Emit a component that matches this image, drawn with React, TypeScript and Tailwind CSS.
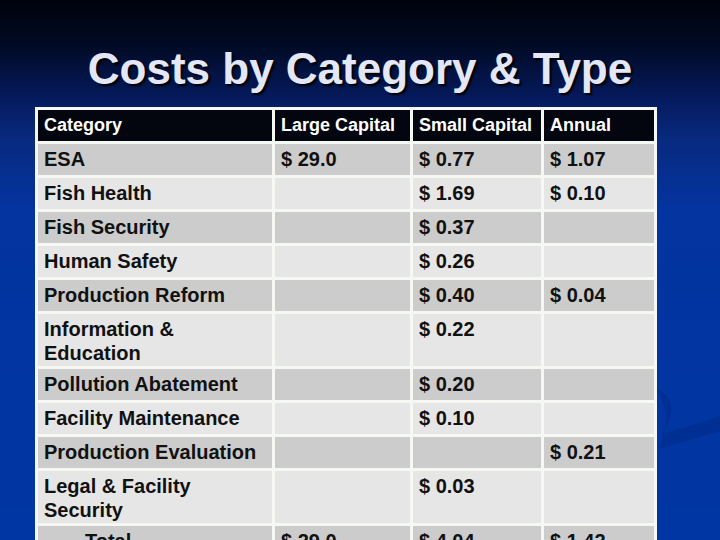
import React from 'react';

type Row = {
  category: string;
  large?: string;
  small?: string;
  annual?: string;
  indent?: boolean;
};

const rows: Row[] = [
  { category: 'ESA', large: '$ 29.0', small: '$ 0.77', annual: '$ 1.07' },
  { category: 'Fish Health', small: '$ 1.69', annual: '$ 0.10' },
  { category: 'Fish Security', small: '$ 0.37' },
  { category: 'Human Safety', small: '$ 0.26' },
  { category: 'Production Reform', small: '$ 0.40', annual: '$ 0.04' },
  { category: 'Information & Education', small: '$ 0.22' },
  { category: 'Pollution Abatement', small: '$ 0.20' },
  { category: 'Facility Maintenance', small: '$ 0.10' },
  { category: 'Production Evaluation', annual: '$ 0.21' },
  { category: 'Legal & Facility Security', small: '$ 0.03' },
  { category: 'Total', large: '$ 29.0', small: '$ 4.04', annual: '$ 1.42', indent: true },
];

const cell = 'border-[3px] border-[#f6f8f4] align-top px-[6px] pt-[3px] pb-[1px] leading-[24px]';

function Swoosh() {
  return (
    <svg
      className="absolute left-[650px] top-[380px] pointer-events-none"
      width="70"
      height="80"
      viewBox="0 0 70 80"
    >
      <path
        d="M5 8 C 22 15, 28 32, 12 54 C 35 48, 55 41, 70 36 L 70 51 C 50 57, 30 63, 8 69 C 20 46, 18 26, 5 8 Z"
        fill="#002a85"
        opacity="0.5"
      />
    </svg>
  );
}

export default function App() {
  return (
    <div
      className="relative h-[540px] w-[720px] overflow-hidden bg-[linear-gradient(to_bottom,#00030c_0px,#010a24_45px,#05195a_95px,#082a80_140px,#0334a0_210px,#0036a3_540px)]"
      style={{ fontFamily: '"Liberation Sans", Arial, sans-serif' }}
    >
      <Swoosh />
      <h1 className="relative pt-[47px] text-center text-[44px] font-bold leading-[44px] text-[#e4e7f7] [text-shadow:2px_2px_2px_#000]">
        Costs by Category &amp; Type
      </h1>
      <table className="relative ml-[35px] mt-[16px] w-[619px] table-fixed border-collapse text-left font-bold">
        <colgroup>
          <col className="w-[237px]" />
          <col className="w-[138px]" />
          <col className="w-[131px]" />
          <col className="w-[113px]" />
        </colgroup>
        <thead>
          <tr className="bg-[#03060f] text-[18px] text-white">
            <th className={cell}>
              <div className="min-h-[27px]">Category</div>
            </th>
            <th className={cell}>
              <div className="min-h-[27px]">Large Capital</div>
            </th>
            <th className={cell}>
              <div className="min-h-[27px]">Small Capital</div>
            </th>
            <th className={cell}>
              <div className="min-h-[27px]">Annual</div>
            </th>
          </tr>
        </thead>
        <tbody className="text-[20px] text-[#111]">
          {rows.map((row, i) => (
            <tr key={row.category} className={i % 2 === 0 ? 'bg-[#cbcccb]' : 'bg-[#e6e6e6]'}>
              <td className={`${cell} ${row.indent ? 'pl-[47px]' : ''}`}>
                <div className="min-h-[27px]">{row.category}</div>
              </td>
              <td className={cell}>{row.large}</td>
              <td className={cell}>{row.small}</td>
              <td className={cell}>{row.annual}</td>
            </tr>
          ))}
        </tbody>
      </table>
    </div>
  );
}
